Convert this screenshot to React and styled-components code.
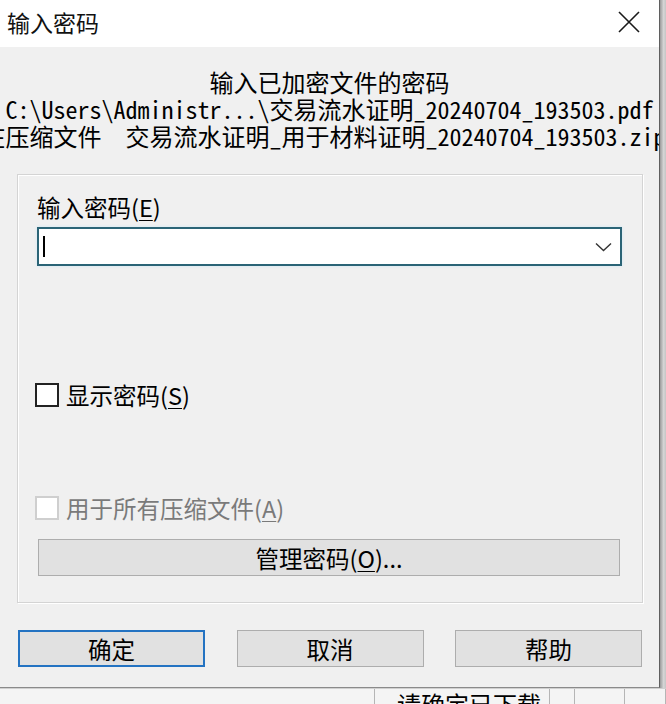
import React from 'react';
import styled, { createGlobalStyle } from 'styled-components';

const GlobalStyle = createGlobalStyle`
  html, body {
    margin: 0;
    padding: 0;
    background: #cfcfcf;
  }
  body {
    width: 666px;
    height: 704px;
    overflow: hidden;
    font-family: 'Noto Sans CJK SC', 'Noto Sans', sans-serif;
    color: #000;
  }
`;

const Screen = styled.div`
  width: 666px;
  height: 704px;
  display: flex;
  flex-direction: column;
  overflow: hidden;
`;

const Top = styled.div`
  display: flex;
  height: 688px;
  background: #b9b9b9;
`;

const Dialog = styled.div`
  width: 660px;
  height: 688px;
  display: flex;
  flex-direction: column;
  background: #f0f0f0;
  border-right: 1px solid #5f5f5f;
  border-bottom: 1px solid #8a8a8a;
  box-sizing: border-box;
  overflow: hidden;
`;

const TitleBar = styled.div`
  height: 47px;
  flex: none;
  display: flex;
  align-items: center;
  justify-content: space-between;
  background: #fff;
  padding: 0 19px 0 7px;
`;

const Title = styled.div`
  font-size: 23px;
  line-height: 30px;
  margin-top: -4px;
  color: #111;
`;

const CloseIcon = () => (
  <svg width="22" height="22" viewBox="0 0 22 22" style={{ marginTop: -3 }}>
    <path d="M1 1 L21 21 M21 1 L1 21" stroke="#1a1a1a" strokeWidth="1.6" fill="none" />
  </svg>
);

const Body = styled.div`
  flex: 1;
  display: flex;
  flex-direction: column;
  padding-top: 21px;
`;

const InfoLine = styled.div`
  display: flex;
  justify-content: center;
  white-space: pre;
  height: 27px;
  line-height: 27px;
  font-size: 24px;
  font-family: ${(p) =>
    p.$mono
      ? `'Noto Sans Mono CJK SC', 'Noto Sans CJK SC', 'Liberation Mono', monospace`
      : `'Noto Sans CJK SC', sans-serif`};
`;

const GroupBox = styled.div`
  margin: 25px 16px 0 17px;
  height: 429px;
  box-sizing: border-box;
  border: 1px solid #d4d4d4;
  box-shadow: inset 1px 1px 0 #fff, 1px 1px 0 #fff;
  padding: 17px 20px 0 19px;
  display: flex;
  flex-direction: column;
`;

const Label = styled.div`
  font-size: 23.5px;
  line-height: 30px;
  height: 30px;
`;

const Key = styled.span`
  text-decoration: underline;
  text-underline-offset: 3px;
  text-decoration-thickness: 1px;
`;

const Combo = styled.div`
  margin-top: 5px;
  height: 39px;
  box-sizing: border-box;
  border: 2px solid #2b6476;
  background: #fff;
  box-shadow: 0 0 3px #cde6f4;
  display: flex;
  align-items: center;
  justify-content: space-between;
  padding: 0 8px 0 4px;
`;

const Caret = styled.div`
  width: 2px;
  height: 21px;
  background: #000;
`;

const Chevron = () => (
  <svg width="17" height="10" viewBox="0 0 17 10">
    <path d="M1 1.5 L8.5 8.5 L16 1.5" stroke="#333" strokeWidth="1.4" fill="none" />
  </svg>
);

const CheckRow = styled.label`
  display: flex;
  align-items: center;
  height: 30px;
  margin-top: ${(p) => p.$gap}px;
  font-size: 23.5px;
  color: ${(p) => (p.$disabled ? '#7a7a7a' : '#000')};
`;

const Box = styled.span`
  width: 24px;
  height: 24px;
  box-sizing: border-box;
  margin-left: -2px;
  margin-right: 7px;
  border: 2px solid ${(p) => (p.$disabled ? '#cfcfcf' : '#222')};
  background: #fff;
`;

const WideButton = styled.div`
  margin: 16px 2px 0 1px;
  height: 37px;
  box-sizing: border-box;
  border: 1px solid #adadad;
  background: #e1e1e1;
  display: flex;
  align-items: center;
  justify-content: center;
  font-size: 23.5px;
`;

const ButtonRow = styled.div`
  display: grid;
  grid-template-columns: repeat(3, 187px);
  justify-content: space-between;
  margin: 27px 17px 0 18px;
`;

const Button = styled.div`
  height: 37px;
  box-sizing: border-box;
  border: ${(p) => (p.$default ? '2px solid #2473c2' : '1px solid #adadad')};
  background: #e1e1e1;
  display: flex;
  align-items: center;
  justify-content: center;
  font-size: 23.5px;
`;

const SideStrip = styled.div`
  flex: 1;
  background: linear-gradient(90deg, #9a9a9a 0, #d6d6d6 60%, #c4c4c4 100%);
`;

const Behind = styled.div`
  height: 16px;
  display: flex;
  background: #f4f4f4;
  border-top: 1px solid #d0d0d0;
  overflow: hidden;
`;

const Cell = styled.div`
  width: ${(p) => p.$w}px;
  flex: none;
  border-right: 1px solid #b5b5b5;
  font-size: 24px;
  line-height: 30px;
  padding-left: ${(p) => p.$pad || 0}px;
  box-sizing: border-box;
  white-space: nowrap;
  overflow: hidden;
`;

export default function App() {
  return (
    <>
      <GlobalStyle />
      <Screen>
        <Top>
          <Dialog>
            <TitleBar>
              <Title>输入密码</Title>
              <CloseIcon />
            </TitleBar>
            <Body>
              <InfoLine>输入已加密文件的密码</InfoLine>
              <InfoLine $mono>C:\Users\Administr...\交易流水证明_20240704_193503.pdf</InfoLine>
              <InfoLine $mono>{'在压缩文件  交易流水证明_用于材料证明_20240704_193503.zip '}</InfoLine>

              <GroupBox>
                <Label>
                  输入密码(<Key>E</Key>)
                </Label>
                <Combo>
                  <Caret />
                  <Chevron />
                </Combo>
                <CheckRow $gap={114}>
                  <Box />
                  显示密码(<Key>S</Key>)
                </CheckRow>
                <CheckRow $gap={83} $disabled>
                  <Box $disabled />
                  用于所有压缩文件(<Key>A</Key>)
                </CheckRow>
                <WideButton>
                  管理密码(<Key>O</Key>)...
                </WideButton>
              </GroupBox>

              <ButtonRow>
                <Button $default>确定</Button>
                <Button>取消</Button>
                <Button>帮助</Button>
              </ButtonRow>
            </Body>
          </Dialog>
          <SideStrip />
        </Top>
        <Behind>
          <Cell $w={375} />
          <Cell $w={175} $pad={22}>请确定已下载</Cell>
          <Cell $w={25} />
          <Cell $w={50} />
          <Cell $w={41} />
        </Behind>
      </Screen>
    </>
  );
}
